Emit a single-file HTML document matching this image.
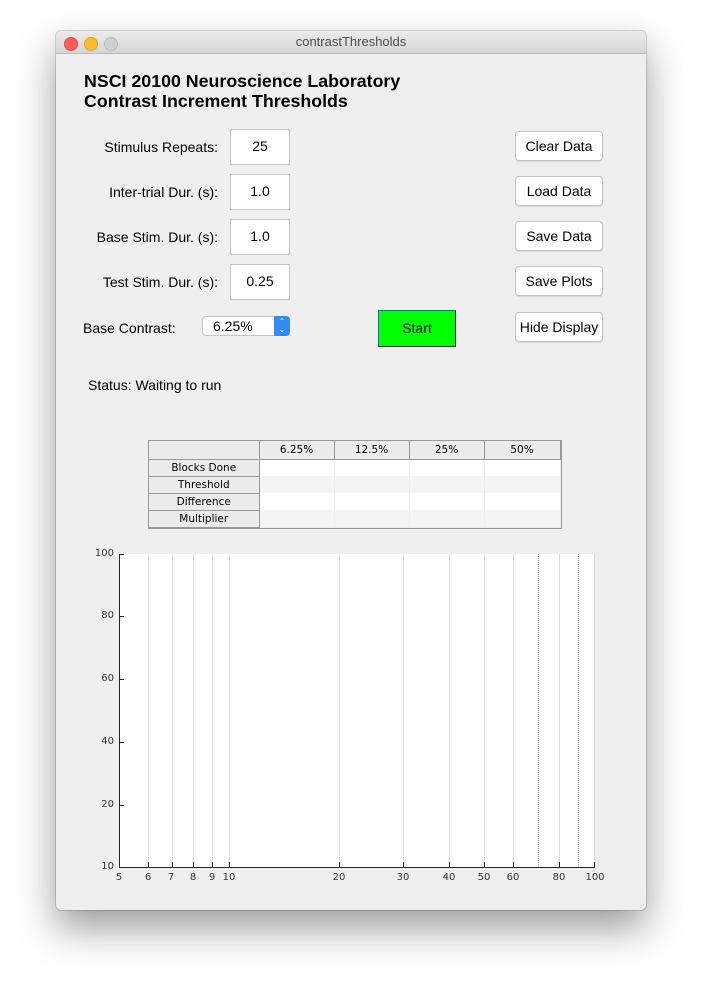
<!DOCTYPE html>
<html><head><style>
body{margin:0;width:702px;height:990px;background:#fff;position:relative;font-family:"Liberation Sans",sans-serif;overflow:hidden}
.win{position:absolute;left:56px;top:31px;width:590px;height:879px;background:#efefef;border-radius:5px;box-shadow:0 18px 40px rgba(0,0,0,.4),0 0 0 1px rgba(0,0,0,.15);overflow:hidden}
.tb{position:absolute;left:0;top:0;width:590px;height:22px;background:linear-gradient(#ebebeb,#d6d6d6);border-bottom:1px solid #b8b8b8;text-align:center;font-size:13px;line-height:22px;color:#4d4d4d}
.dot{position:absolute;top:6px;width:12px;height:12px;border-radius:50%}
.a{position:absolute}
.lbl{position:absolute;font-size:14px;color:#000;text-align:right}
.tx{position:absolute;left:230px;width:58px;height:34px;background:#fff;border:1px solid #c8c8c8;font-size:14px;text-align:center;line-height:32px}
.btn{position:absolute;left:515px;width:86px;height:28px;background:#fff;border:1px solid #c4c4c4;border-radius:4px;font-size:14px;text-align:center;line-height:28px;box-shadow:0 1px 1px rgba(0,0,0,.1)}
table{border-collapse:collapse;font-size:10.5px;font-family:"DejaVu Sans",sans-serif;table-layout:fixed}
td{padding:0;overflow:hidden;white-space:nowrap}
.g{position:absolute;top:554px;width:1px;height:313px;background:#dcdcdc}
.xt{position:absolute;top:872px;font-size:10px;color:#333;width:30px;margin-left:-15px;text-align:center;font-family:"DejaVu Sans",sans-serif}
.yt{position:absolute;left:84px;width:30px;font-size:10px;color:#333;text-align:right;font-family:"DejaVu Sans",sans-serif}
.tk{position:absolute;top:862px;width:1px;height:5px;background:#222}
</style></head><body>
<div class="win"><div class="tb">contrastThresholds
<div class="dot" style="left:8px;background:#fc5f57;border:.5px solid #de4b44"></div>
<div class="dot" style="left:28px;background:#fdbc2e;border:.5px solid #de9f25"></div>
<div class="dot" style="left:48px;background:#d0d0d0;border:.5px solid #bcbcbc"></div></div></div>
<div class="a" style="left:84px;top:71px;font-size:17.8px;font-weight:bold;line-height:20px">NSCI 20100 Neuroscience Laboratory<br>Contrast Increment Thresholds</div>
<div class="lbl" style="left:60px;width:158px;top:139px">Stimulus Repeats:</div>
<div class="lbl" style="left:60px;width:158px;top:184px">Inter-trial Dur. (s):</div>
<div class="lbl" style="left:60px;width:158px;top:229px">Base Stim. Dur. (s):</div>
<div class="lbl" style="left:60px;width:158px;top:274px">Test Stim. Dur. (s):</div>
<div class="lbl" style="left:83px;top:320px">Base Contrast:</div>
<div class="tx" style="top:129px">25</div>
<div class="tx" style="top:174px">1.0</div>
<div class="tx" style="top:219px">1.0</div>
<div class="tx" style="top:264px">0.25</div>
<div class="a" style="left:202px;top:316px;width:88px;height:20px;background:#fff;border:1px solid #c4c4c4;border-radius:4px;font-size:14px;line-height:19px;box-sizing:border-box;padding-left:10px">6.25%
<div class="a" style="right:-1px;top:-1px;width:16px;height:20px;background:#2f8cf8;border-radius:0 4px 4px 0;color:#fff;font-size:8px;line-height:8px;text-align:center;padding-top:2px;box-sizing:border-box">⌃<br>⌄</div></div>
<div class="a" style="left:378px;top:310px;width:76px;height:35px;background:#00ff00;border:1px solid #333;border-top-color:#2a5fd0;border-left-color:#2a5fd0;font-size:14px;text-align:center;line-height:35px">Start</div>
<div class="btn" style="top:131px">Clear Data</div>
<div class="btn" style="top:176px">Load Data</div>
<div class="btn" style="top:221px">Save Data</div>
<div class="btn" style="top:266px">Save Plots</div>
<div class="btn" style="top:312px">Hide Display</div>
<div class="a" style="left:88px;top:377px;font-size:14px">Status: Waiting to run</div>
<div class="a" style="left:148px;top:440px;width:412px;height:87px;border:1px solid #999;background:#f0f0f0">
<table style="width:411px">
<colgroup><col style="width:110px"><col style="width:75px"><col style="width:75px"><col style="width:75px"><col style="width:76px"></colgroup>
<tr style="height:18px;background:#ececec"><td style="border-right:1px solid #999;border-bottom:1px solid #999"></td><td style="text-align:center;border-right:1px solid #999;border-bottom:1px solid #999">6.25%</td><td style="text-align:center;border-right:1px solid #999;border-bottom:1px solid #999">12.5%</td><td style="text-align:center;border-right:1px solid #999;border-bottom:1px solid #999">25%</td><td style="text-align:center;border-right:1px solid #999;border-bottom:1px solid #999">50%</td></tr>
<tr style="height:17px;background:#fff"><td style="text-align:center;background:#ececec;border:1px solid #999;border-left:0">Blocks Done</td><td style="border-right:1px solid #eee"></td><td style="border-right:1px solid #eee"></td><td style="border-right:1px solid #eee"></td><td></td></tr>
<tr style="height:17px;background:#f4f4f4"><td style="text-align:center;background:#ececec;border:1px solid #999;border-left:0">Threshold</td><td style="border-right:1px solid #eee"></td><td style="border-right:1px solid #eee"></td><td style="border-right:1px solid #eee"></td><td></td></tr>
<tr style="height:17px;background:#fff"><td style="text-align:center;background:#ececec;border:1px solid #999;border-left:0">Difference</td><td style="border-right:1px solid #eee"></td><td style="border-right:1px solid #eee"></td><td style="border-right:1px solid #eee"></td><td></td></tr>
<tr style="height:17px;background:#f4f4f4"><td style="text-align:center;background:#ececec;border:1px solid #999;border-left:0">Multiplier</td><td style="border-right:1px solid #eee"></td><td style="border-right:1px solid #eee"></td><td style="border-right:1px solid #eee"></td><td></td></tr>
</table></div>
<div class="a" style="left:119px;top:554px;width:476px;height:313px;background:#fff"></div>
<div class="g" style="left:148px"></div><div class="g" style="left:172px"></div><div class="g" style="left:193px"></div><div class="g" style="left:212px"></div><div class="g" style="left:229px"></div><div class="g" style="left:339px"></div><div class="g" style="left:403px"></div><div class="g" style="left:449px"></div><div class="g" style="left:484px"></div><div class="g" style="left:513px"></div><div class="g" style="left:559px"></div><div class="g" style="left:594px"></div>
<div class="a" style="left:538px;top:554px;height:313px;border-left:1px dotted #bbb"></div>
<div class="a" style="left:578px;top:554px;height:313px;border-left:1px dotted #bbb"></div>
<div class="a" style="left:119px;top:554px;width:1px;height:314px;background:#222"></div>
<div class="a" style="left:119px;top:867px;width:476px;height:1px;background:#222"></div>
<div class="a" style="left:120px;top:554px;width:4px;height:1px;background:#222"></div>
<div class="a" style="left:120px;top:616px;width:4px;height:1px;background:#222"></div>
<div class="a" style="left:120px;top:679px;width:4px;height:1px;background:#222"></div>
<div class="a" style="left:120px;top:742px;width:4px;height:1px;background:#222"></div>
<div class="a" style="left:120px;top:805px;width:4px;height:1px;background:#222"></div>
<div class="tk" style="left:148px"></div><div class="tk" style="left:172px"></div><div class="tk" style="left:193px"></div><div class="tk" style="left:212px"></div><div class="tk" style="left:229px"></div><div class="tk" style="left:339px"></div><div class="tk" style="left:403px"></div><div class="tk" style="left:449px"></div><div class="tk" style="left:484px"></div><div class="tk" style="left:513px"></div><div class="tk" style="left:559px"></div><div class="tk" style="left:594px"></div>
<div class="yt" style="top:548px">100</div><div class="yt" style="top:610px">80</div><div class="yt" style="top:673px">60</div><div class="yt" style="top:736px">40</div><div class="yt" style="top:799px">20</div><div class="yt" style="top:861px">10</div>
<div class="xt" style="left:119px">5</div><div class="xt" style="left:148px">6</div><div class="xt" style="left:171px">7</div><div class="xt" style="left:193px">8</div><div class="xt" style="left:212px">9</div><div class="xt" style="left:229px">10</div><div class="xt" style="left:339px">20</div><div class="xt" style="left:403px">30</div><div class="xt" style="left:449px">40</div><div class="xt" style="left:484px">50</div><div class="xt" style="left:513px">60</div><div class="xt" style="left:559px">80</div><div class="xt" style="left:595px">100</div>
</body></html>
